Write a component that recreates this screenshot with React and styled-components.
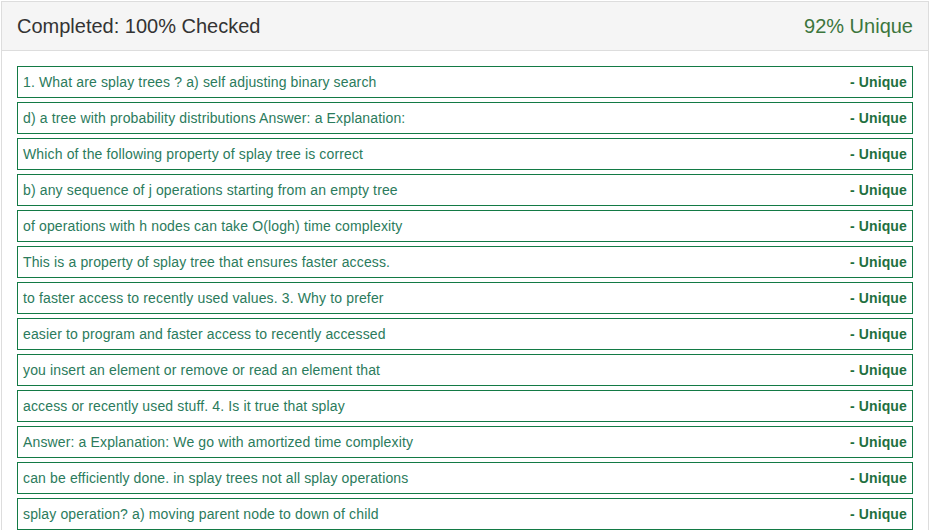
import styled, { createGlobalStyle } from 'styled-components';

const GlobalStyle = createGlobalStyle`
  body {
    margin: 0;
    background: #fff;
    font-family: "Liberation Sans", Arial, sans-serif;
  }
`;

const S = {};
S.Panel = styled('div')`
  margin: 1px 0 0 1px;
  width: 928px;
  box-sizing: border-box;
  border: 1px solid #ddd;
  border-bottom: none;
`;

S.Header = styled('div')`
  height: 49px;
  box-sizing: border-box;
  padding: 0 15px;
  background: #f5f5f5;
  border-bottom: 1px solid #ddd;
  display: flex;
  align-items: center;
  justify-content: space-between;
  font-size: 20px;
  color: #333;
`;

S.Score = styled('span')`
  color: #3c763d;
`;

S.Body = styled('div')`
  padding: 15px;
`;

S.Row = styled('div')`
  height: 32px;
  box-sizing: border-box;
  margin-bottom: 4px;
  padding: 0 5px;
  border: 1px solid #137a45;
  display: flex;
  align-items: center;
  justify-content: space-between;
  font-size: 14px;
  letter-spacing: 0.14px;
  color: #2b7b5c;
`;

S.Tag = styled('span')`
  font-weight: bold;
  color: #1f7040;
`;

const lines = [
  '1. What are splay trees ? a) self adjusting binary search',
  'd) a tree with probability distributions Answer: a Explanation:',
  'Which of the following property of splay tree is correct',
  'b) any sequence of j operations starting from an empty tree',
  'of operations with h nodes can take O(logh) time complexity',
  'This is a property of splay tree that ensures faster access.',
  'to faster access to recently used values. 3. Why to prefer',
  'easier to program and faster access to recently accessed',
  'you insert an element or remove or read an element that',
  'access or recently used stuff. 4. Is it true that splay',
  'Answer: a Explanation: We go with amortized time complexity',
  'can be efficiently done. in splay trees not all splay operations',
  'splay operation? a) moving parent node to down of child',
];

function App() {
  return (
    <>
      <GlobalStyle />
      <S.Panel>
        <S.Header>
          <span>Completed: 100% Checked</span>
          <S.Score>92% Unique</S.Score>
        </S.Header>
        <S.Body>
          {lines.map((line, i) => (
            <S.Row key={i}>
              <span>{line}</span>
              <S.Tag>- Unique</S.Tag>
            </S.Row>
          ))}
        </S.Body>
      </S.Panel>
    </>
  );
}

export default App;
